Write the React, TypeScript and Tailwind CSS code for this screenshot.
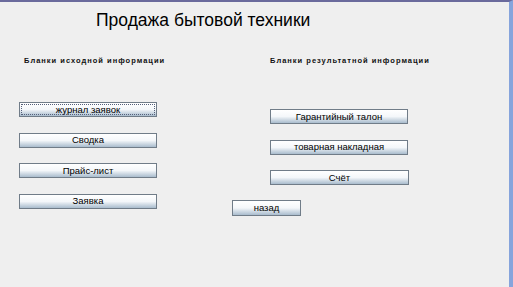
import React from 'react';

const leftForms = ['журнал заявок', 'Сводка', 'Прайс-лист', 'Заявка'];
const rightForms = ['Гарантийный талон', 'товарная накладная', 'Счёт'];

const FormButton: React.FC<{ label: string; focused?: boolean; className?: string }> = ({ label, focused, className = '' }) => (
    <button
        className={`h-[15px] flex items-center justify-center text-[9.5px] leading-none text-black border border-[#707c88] bg-gradient-to-b from-white via-[#f4f7fa] to-[#a9bccd] ${focused ? 'border-[#4a64a8] outline outline-1 outline-dotted outline-[#55607a] -outline-offset-3' : ''} ${className}`}
    >
        {label}
    </button>
);

const App: React.FC = () => {
    return (
        <div className="w-[513px] h-[287px] bg-[#efefef] border-t-2 border-t-[#6a6a9c] border-r-[4px] border-r-[#86a4dc] font-['Liberation_Sans',Arial,sans-serif] overflow-hidden">
            <h1 className="pl-[96px] pt-[8px] text-[17.5px] leading-[20px] text-black">Продажа бытовой техники</h1>

            <div className="flex mt-[27px]">
                {/* исходная информация */}
                <div className="w-[270px] shrink-0 pl-[19px]">
                    <p className="pl-[5px] text-[7.5px] font-bold tracking-[1px] leading-[8px] text-[#111]">Бланки исходной информации</p>
                    <div className="mt-[37px] flex flex-col gap-[15.5px]">
                        {leftForms.map((f, i) => (
                            <FormButton key={f} label={f} focused={i === 0} className="w-[138px]" />
                        ))}
                    </div>
                </div>

                {/* результатная информация */}
                <div>
                    <p className="text-[7.5px] font-bold tracking-[1px] leading-[8px] text-[#111]">Бланки результатной информации</p>
                    <div className="mt-[44px] flex flex-col gap-[15.5px]">
                        {rightForms.map(f => (
                            <FormButton key={f} label={f} className={f === 'Счёт' ? 'w-[139px]' : 'w-[138px]'} />
                        ))}
                    </div>
                    <FormButton label="назад" className="mt-[15px] -ml-[38px] w-[69px] h-[16px]" />
                </div>
            </div>
        </div>
    );
};

export default App;
